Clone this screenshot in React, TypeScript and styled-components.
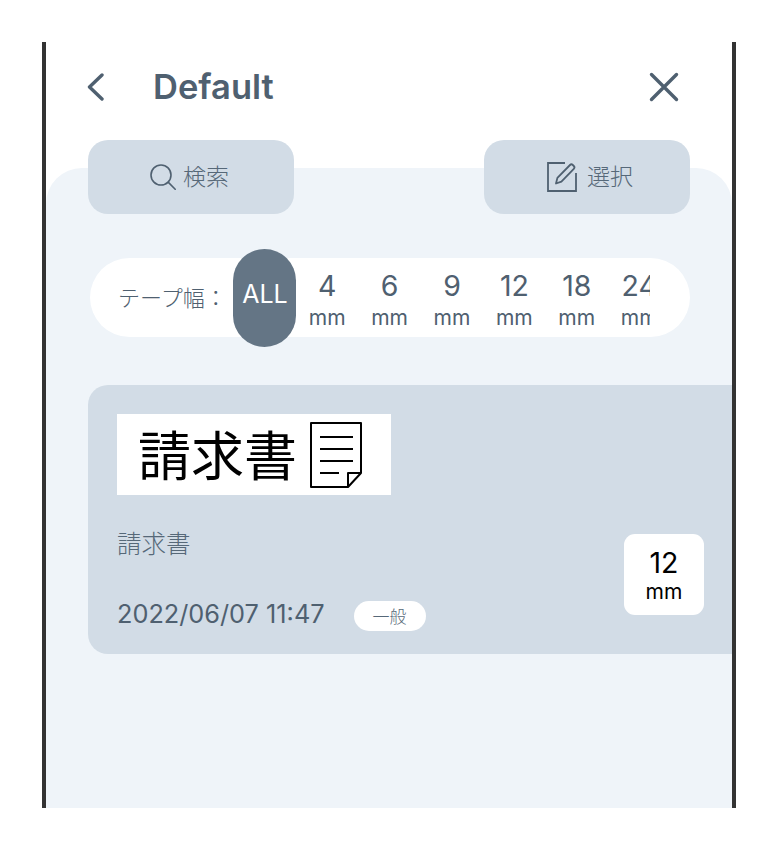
import styled, {createGlobalStyle} from 'styled-components';

const GlobalStyle = createGlobalStyle`
  html, body {
    margin: 0;
    padding: 0;
    background: #fff;
  }
  body {
    font-family: Inter, "Noto Sans CJK JP", sans-serif;
  }
`;

const TEXT = '#4f6070';
const TEXT_LIGHT = '#566878';
const TAPE_WIDTHS = [4, 6, 9, 12, 18, 24];

const Page = styled.div`
  width: 780px;
  height: 852px;
  padding: 42px 44px 44px 42px;
  box-sizing: border-box;
`;

const Phone = styled.div`
  height: 766px;
  border-left: 4px solid #333;
  border-right: 4px solid #333;
  box-sizing: border-box;
  overflow: hidden;
  display: flex;
  flex-direction: column;
`;

const Header = styled.header`
  height: 98px;
  display: flex;
  align-items: center;
  padding: 0 53px 8px 41px;
  box-sizing: border-box;
  color: ${TEXT};
`;

const Title = styled.h1`
  flex: 1;
  margin: 0 0 0 49px;
  font-size: 34.5px;
  line-height: 40px;
  font-weight: 600;
`;

const Toolbar = styled.div`
  position: relative;
  z-index: 1;
  display: flex;
  justify-content: space-between;
  padding: 0 42px;
`;

const ToolButton = styled.button<{$gap: number; $shift: number}>`
  width: 206px;
  height: 74px;
  border: 0;
  border-radius: 20px;
  background: #d2dce6;
  color: ${TEXT_LIGHT};
  display: flex;
  align-items: center;
  justify-content: center;
  gap: ${p => p.$gap}px;
  font-family: inherit;
  font-size: 23px;
  font-weight: 300;
  line-height: 72px;
  padding: 0 ${p => (p.$shift < 0 ? -p.$shift : 0)}px 0 ${p => (p.$shift > 0 ? p.$shift : 0)}px;
`;

const Panel = styled.main`
  flex: 1;
  margin-top: -46px;
  padding-top: 90px;
  background: #eff4f9;
  border-radius: 36px 36px 0 0;
`;

const TapeBar = styled.div`
  width: 600px;
  height: 79px;
  margin-left: 44px;
  background: #fff;
  border-radius: 40px;
  display: flex;
  align-items: center;
  box-sizing: border-box;
  padding: 0 40px 0 28px;
`;

const TapeLabel = styled.span`
  width: 115px;
  flex: none;
  font-size: 22px;
  font-weight: 300;
  line-height: 74px;
  color: ${TEXT};
  white-space: nowrap;
`;

const TapeScroller = styled.div`
  flex: 1;
  min-width: 0;
  display: flex;
  align-items: center;
  overflow-x: clip;
`;

const AllChip = styled.div`
  flex: none;
  width: 63px;
  height: 98px;
  padding: 0 0 8px 1px;
  box-sizing: border-box;
  border-radius: 32px;
  background: #647585;
  color: #fff;
  font-size: 25px;
  display: flex;
  align-items: center;
  justify-content: center;
`;

const TapeOption = styled.div`
  flex: none;
  width: 62.4px;
  padding-top: 6px;
  text-align: center;
  color: ${TEXT};
`;

const TapeNumber = styled.div`
  font-size: 28.5px;
  line-height: 30px;
`;

const TapeUnit = styled.div`
  font-size: 21px;
  line-height: 24px;
  padding-top: 5px;
`;

const Card = styled.article`
  margin: 48px 0 0 42px;
  height: 269px;
  background: #d2dce6;
  border-radius: 20px 0 0 20px;
  padding: 29px 28px 0 29px;
  box-sizing: border-box;
  display: flex;
  justify-content: space-between;
`;

const CardBody = styled.div`
  display: flex;
  flex-direction: column;
`;

const LabelPreview = styled.div`
  width: 274px;
  height: 81px;
  background: #fff;
  box-sizing: border-box;
  padding: 0 0 0 21px;
  display: flex;
  align-items: center;
  gap: 13px;
  color: #000;
  white-space: nowrap;
`;

const PreviewText = styled.span`
  font-size: 53px;
  line-height: 75px;
  padding-top: 6px;
`;

const CardName = styled.div`
  margin-top: 31px;
  font-size: 24.5px;
  font-weight: 300;
  line-height: 36px;
  color: ${TEXT_LIGHT};
`;

const CardMeta = styled.div`
  margin-top: 34px;
  display: flex;
  align-items: center;
  gap: 29px;
`;

const CardDate = styled.span`
  font-size: 25.3px;
  line-height: 36px;
  color: ${TEXT};
`;

const CategoryTag = styled.span`
  width: 72px;
  height: 30px;
  margin-top: 3px;
  border-radius: 15px;
  background: #fff;
  color: ${TEXT_LIGHT};
  font-size: 17px;
  font-weight: 300;
  display: flex;
  align-items: center;
  justify-content: center;
`;

const WidthBadge = styled.div`
  align-self: flex-start;
  margin-top: 120px;
  width: 80px;
  height: 81px;
  padding-top: 3px;
  box-sizing: border-box;
  border-radius: 11px;
  background: #fff;
  color: #000;
  display: flex;
  flex-direction: column;
  align-items: center;
  justify-content: center;
`;

const BadgeUnit = styled(TapeUnit)`
  padding-top: 2px;
`;

const BackIcon = () => (
  <svg width="17" height="28" viewBox="0 0 17 28" fill="none" stroke={TEXT} strokeWidth="3.4" strokeLinecap="round" strokeLinejoin="round">
    <path d="M15 2 2.5 14 15 26" />
  </svg>
);

const CloseIcon = () => (
  <svg width="30" height="30" viewBox="0 0 30 30" fill="none" stroke={TEXT} strokeWidth="3.4" strokeLinecap="round">
    <path d="M2.5 2.5l25 25M27.5 2.5l-25 25" />
  </svg>
);

const SearchIcon = () => (
  <svg width="26" height="26" viewBox="0 0 26 26" fill="none" stroke={TEXT} strokeWidth="1.6" strokeLinecap="round">
    <circle cx="11" cy="11" r="10" />
    <path d="M18.4 18.4l6.8 6.8" />
  </svg>
);

const EditIcon = () => (
  <svg width="30" height="30" viewBox="0 0 30 30" fill="none" stroke={TEXT} strokeWidth="1.8">
    <path d="M18 1H1v28h28V11" />
    <path d="M9 21.5l1.4-5.6L23 3a2 2 0 0 1 2.8 0l1 1a2 2 0 0 1 0 2.8L14.4 19.6z" strokeLinejoin="round" />
  </svg>
);

const DocumentIcon = () => (
  <svg width="52" height="66" viewBox="0 0 52 66" fill="none" stroke="#000" strokeWidth="2" strokeLinejoin="round">
    <path d="M1 1h50v50L38 65H1z" />
    <path d="M51 51H38v14" />
    <path d="M10 15h33M10 27h33M10 39h33M10 51h19" />
  </svg>
);

export default function App() {
  return (
    <Page>
      <GlobalStyle />
      <Phone>
        <Header>
          <BackIcon />
          <Title>Default</Title>
          <CloseIcon />
        </Header>

        <Toolbar>
          <ToolButton $gap={7} $shift={-3}>
            <SearchIcon />
            検索
          </ToolButton>
          <ToolButton $gap={10} $shift={6}>
            <EditIcon />
            選択
          </ToolButton>
        </Toolbar>

        <Panel>
          <TapeBar>
            <TapeLabel>テープ幅：</TapeLabel>
            <TapeScroller>
              <AllChip>ALL</AllChip>
              {TAPE_WIDTHS.map(width => (
                <TapeOption key={width}>
                  <TapeNumber>{width}</TapeNumber>
                  <TapeUnit>mm</TapeUnit>
                </TapeOption>
              ))}
            </TapeScroller>
          </TapeBar>

          <Card>
            <CardBody>
              <LabelPreview>
                <PreviewText>請求書</PreviewText>
                <DocumentIcon />
              </LabelPreview>
              <CardName>請求書</CardName>
              <CardMeta>
                <CardDate>2022/06/07 11:47</CardDate>
                <CategoryTag>一般</CategoryTag>
              </CardMeta>
            </CardBody>
            <WidthBadge>
              <TapeNumber>12</TapeNumber>
              <BadgeUnit>mm</BadgeUnit>
            </WidthBadge>
          </Card>
        </Panel>
      </Phone>
    </Page>
  );
}
